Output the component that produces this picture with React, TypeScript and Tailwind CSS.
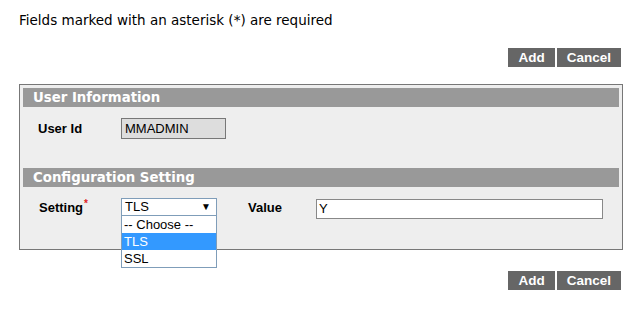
import React from 'react';

const verdana = "font-['DejaVu_Sans',Verdana,sans-serif]";
const arial = "font-['Liberation_Sans',Arial,sans-serif]";

// * Buttons
function ActionButtons() {
  return (
    <div className="flex justify-end gap-[2px] pr-[18px]">
      {['Add', 'Cancel'].map((label) => (
        <button
          key={label}
          type="button"
          className={`${arial} h-[19px] bg-[#666666] px-[10px] text-[13.5px] leading-[19px] font-bold text-white`}
        >
          {label}
        </button>
      ))}
    </div>
  );
}

function SectionHeader({ title }: { title: string }) {
  return (
    <div
      className={`${verdana} h-[19px] bg-[#999999] pl-[10px] text-[13.3px] leading-[19px] font-bold text-white`}
    >
      {title}
    </div>
  );
}

export default function App() {
  return (
    <div className="h-[312px] w-[639px] bg-white pt-[12px]">
      {/* Note */}
      <p className={`${verdana} ml-[19px] text-[13.5px] leading-[16px] text-black`}>
        Fields marked with an asterisk (*) are required
      </p>

      <div className="mt-[20px]">
        <ActionButtons />
      </div>

      {/* Panel */}
      <div className="mt-[17px] ml-[19px] h-[166px] w-[604px] border border-[#777777] bg-[#eeeeee] p-[3px]">
        <SectionHeader title="User Information" />

        <div className="mt-[11px] flex items-center">
          <span className={`${arial} ml-[15px] w-[83px] text-[13px] font-bold text-black`}>
            User Id
          </span>
          <div
            className={`${arial} h-[21px] w-[105px] border border-[#777777] bg-[#dddddd] pl-[3px] text-[13px] leading-[20px] text-black`}
          >
            MMADMIN
          </div>
        </div>

        <div className="mt-[29px]">
          <SectionHeader title="Configuration Setting" />
        </div>

        <div className="mt-[11px] flex items-start">
          <span
            className={`${arial} mt-[1px] ml-[16px] w-[82px] text-[13px] leading-[18px] font-bold text-black`}
          >
            Setting
            <sup className="ml-[1px] text-[10px] text-[#e02020]">*</sup>
          </span>

          {/* Select (open) */}
          <div className="relative w-[96px]">
            <div
              className={`${arial} flex h-[18px] items-center justify-between border border-[#7f9db9] bg-white pr-[5px] pl-[3px] text-[13px] text-black`}
            >
              <span>TLS</span>
              <span className="text-[10px] leading-none">▼</span>
            </div>
            <ul
              className={`${arial} absolute top-[18px] left-0 z-10 w-[96px] border border-[#7f9db9] border-t-0 bg-white text-[13px] leading-[17px] text-black`}
            >
              <li className="pl-[2px]">-- Choose --</li>
              <li className="bg-[#3399ff] pl-[2px] text-white">TLS</li>
              <li className="pl-[2px]">SSL</li>
            </ul>
          </div>

          <span
            className={`${arial} mt-[1px] ml-[31px] w-[68px] text-[13px] leading-[18px] font-bold text-black`}
          >
            Value
          </span>
          <div
            className={`${arial} mt-[1px] h-[20px] w-[287px] border border-[#888888] bg-white pl-[2px] text-[13px] leading-[18px] text-black`}
          >
            Y
          </div>
        </div>
      </div>

      <div className="mt-[21px]">
        <ActionButtons />
      </div>
    </div>
  );
}
